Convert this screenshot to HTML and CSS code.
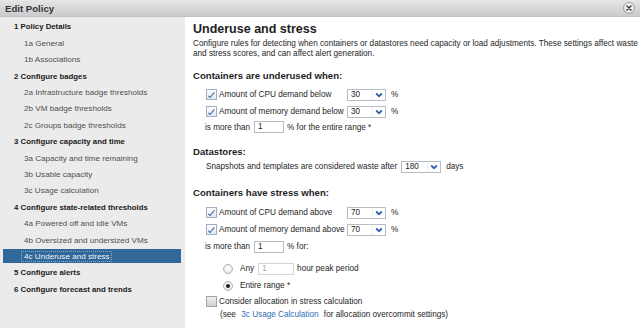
FILE: index.html
```html
<!DOCTYPE html>
<html>
<head>
<meta charset="utf-8">
<title>Edit Policy</title>
<link rel="stylesheet" href="styles.css">
</head>
<body>
<div class="dialog">
  <div class="titlebar">
    <span class="title">Edit Policy</span>
    <span class="close">
      <svg width="12" height="12" viewBox="0 0 12 12">
        <defs>
          <radialGradient id="cg" cx="50%" cy="40%" r="60%">
            <stop offset="0" stop-color="#ffffff"/>
            <stop offset="1" stop-color="#dcdcdc"/>
          </radialGradient>
        </defs>
        <circle cx="6" cy="6" r="5.5" fill="url(#cg)" stroke="#a3a3a3" stroke-width="1"/>
        <path d="M4 4 L8 8 M8 4 L4 8" stroke="#3c3c3c" stroke-width="1.5" stroke-linecap="round"/>
      </svg>
    </span>
  </div>
  <div class="body">
    <nav class="side">
      <div class="item h">1 Policy Details</div>
      <div class="item s">1a General</div>
      <div class="item s">1b Associations</div>
      <div class="item h">2 Configure badges</div>
      <div class="item s">2a Infrastructure badge thresholds</div>
      <div class="item s">2b VM badge thresholds</div>
      <div class="item s">2c Groups badge thresholds</div>
      <div class="item h">3 Configure capacity and time</div>
      <div class="item s">3a Capacity and time remaining</div>
      <div class="item s">3b Usable capacity</div>
      <div class="item s">3c Usage calculation</div>
      <div class="item h">4 Configure state-related thresholds</div>
      <div class="item s">4a Powered off and idle VMs</div>
      <div class="item s">4b Oversized and undersized VMs</div>
      <div class="item sel"><span class="bar"><span class="focus">4c Underuse and stress</span></span></div>
      <div class="item h">5 Configure alerts</div>
      <div class="item h">6 Configure forecast and trends</div>
    </nav>
    <main class="main">
      <h1 class="page-title">Underuse and stress</h1>
      <p class="desc">Configure rules for detecting when containers or datastores need capacity or load adjustments. These settings affect waste<br>and stress scores, and can affect alert generation.</p>

      <h2 class="sec first">Containers are underused when:</h2>
      <div class="group g1">
        <div class="row">
          <span class="cb on"></span><span class="lbl">Amount of CPU demand below</span>
          <span class="combo"><span class="val">30</span><span class="dd"><svg width="8" height="6" viewBox="0 0 8 6"><path d="M1.2 1.5 L4 4.3 L6.8 1.5" fill="none" stroke="#2d5ea8" stroke-width="1.8"/></svg></span></span>
          <span class="unit">%</span>
        </div>
        <div class="row">
          <span class="cb on"></span><span class="lbl">Amount of memory demand below</span>
          <span class="combo"><span class="val">30</span><span class="dd"><svg width="8" height="6" viewBox="0 0 8 6"><path d="M1.2 1.5 L4 4.3 L6.8 1.5" fill="none" stroke="#2d5ea8" stroke-width="1.8"/></svg></span></span>
          <span class="unit">%</span>
        </div>
        <div class="row more short">
          <span class="more-lbl">is more than</span>
          <span class="num">1</span>
          <span class="after">% for the entire range *</span>
        </div>
      </div>

      <h2 class="sec">Datastores:</h2>
      <div class="group">
        <div class="row">
          <span>Snapshots and templates are considered waste after</span>
          <span class="combo wide"><span class="val">180</span><span class="dd"><svg width="8" height="6" viewBox="0 0 8 6"><path d="M1.2 1.5 L4 4.3 L6.8 1.5" fill="none" stroke="#2d5ea8" stroke-width="1.8"/></svg></span></span>
          <span class="unit">days</span>
        </div>
      </div>

      <h2 class="sec">Containers have stress when:</h2>
      <div class="group g3">
        <div class="row">
          <span class="cb on"></span><span class="lbl">Amount of CPU demand above</span>
          <span class="combo"><span class="val">70</span><span class="dd"><svg width="8" height="6" viewBox="0 0 8 6"><path d="M1.2 1.5 L4 4.3 L6.8 1.5" fill="none" stroke="#2d5ea8" stroke-width="1.8"/></svg></span></span>
          <span class="unit">%</span>
        </div>
        <div class="row">
          <span class="cb on"></span><span class="lbl">Amount of memory demand above</span>
          <span class="combo"><span class="val">70</span><span class="dd"><svg width="8" height="6" viewBox="0 0 8 6"><path d="M1.2 1.5 L4 4.3 L6.8 1.5" fill="none" stroke="#2d5ea8" stroke-width="1.8"/></svg></span></span>
          <span class="unit">%</span>
        </div>
        <div class="row more">
          <span class="more-lbl">is more than</span>
          <span class="num">1</span>
          <span class="after">% for:</span>
        </div>
        <div class="radios">
          <div class="row radio">
            <span class="rb"></span><span>Any</span>
            <span class="num disabled">1</span>
            <span class="after">hour peak period</span>
          </div>
          <div class="row radio">
            <span class="rb on"></span><span>Entire range *</span>
          </div>
        </div>
        <div class="row short">
          <span class="cb"></span><span>Consider allocation in stress calculation</span>
        </div>
        <div class="note">(see <a class="link" href="#">3c Usage Calculation</a> for allocation overcommit settings)</div>
      </div>
    </main>
  </div>
</div>
</body>
</html>
```

FILE: styles.css
```css
html, body {
  margin: 0;
  padding: 0;
}

body {
  width: 640px;
  height: 328px;
  overflow: hidden;
  background: #ffffff;
  font-family: "Liberation Sans", Arial, sans-serif;
  font-size: 8.2px;
  color: #262626;
}

.dialog {
  display: flex;
  flex-direction: column;
  height: 328px;
}

.titlebar {
  flex: none;
  height: 17px;
  box-sizing: border-box;
  padding: 0 5px;
  display: flex;
  align-items: center;
  justify-content: space-between;
  background: linear-gradient(#e6e6e6, #cbcbcb);
  border-bottom: 1px solid #c2c2c2;
}

.title {
  font-size: 9.6px;
  font-weight: bold;
  color: #333333;
}

.close {
  width: 12px;
  height: 12px;
  display: flex;
}

.body {
  flex: 1;
  display: flex;
  min-height: 0;
}

/* Sidebar */
.side {
  flex: none;
  width: 185px;
  box-sizing: border-box;
  padding-top: 1.8px;
  background: #ebebeb;
}

.item {
  height: 16.4px;
  display: flex;
  align-items: center;
  white-space: nowrap;
}

.item.h {
  padding-left: 14px;
  font-size: 7.8px;
  font-weight: bold;
  color: #1a1a1a;
}

.item.s {
  padding-left: 24px;
  font-size: 8.1px;
  color: #4f4f4f;
}

.bar {
  margin-left: 3px;
  width: 178px;
  height: 14px;
  box-sizing: border-box;
  padding-left: 18px;
  display: flex;
  align-items: center;
  background: #30689a;
  font-size: 8.1px;
  color: #eef3f8;
}

.focus {
  padding: 0 2px 0 2px;
  border: 1px dotted rgba(210, 225, 240, 0.55);
  line-height: 9px;
}

/* Main */
.main {
  flex: 1;
  box-sizing: border-box;
  padding: 4px 0 0 8px;
  white-space: nowrap;
}

.page-title {
  margin: 0;
  height: 16px;
  line-height: 16px;
  font-size: 12.5px;
  font-weight: bold;
  color: #1e1e1e;
}

.desc {
  margin: 2px 0 0;
  line-height: 10px;
}

.sec {
  margin: 12px 0 0;
  height: 12px;
  line-height: 12px;
  font-size: 9.6px;
  font-weight: bold;
  color: #1e1e1e;
}

.sec.first {
  margin-top: 11px;
}

.group {
  padding-left: 13px;
}

.g1 {
  margin-top: 4px;
}

.g3 {
  margin-top: 5px;
}

.row {
  height: 17px;
  display: flex;
  align-items: center;
}

.row.short {
  height: 14px;
}

.cb {
  flex: none;
  position: relative;
  width: 11px;
  height: 11px;
  box-sizing: border-box;
  margin-right: 2px;
  border: 1px solid #a5a5a5;
  background: linear-gradient(#f0f0f0, #d0d0d0);
}

.cb.on {
  border-color: #9fb0c6;
  background: linear-gradient(#fdfdfe, #e2e9f2);
}

.cb.on::after {
  content: "";
  position: absolute;
  left: 3.2px;
  top: 0.5px;
  width: 2px;
  height: 5.5px;
  border-right: 1.4px solid #3a64a8;
  border-bottom: 1.4px solid #3a64a8;
  transform: rotate(40deg);
}

.lbl {
  width: 128px;
}

.combo {
  flex: none;
  width: 39px;
  height: 12px;
  box-sizing: border-box;
  display: flex;
  border: 1px solid #b8bdc5;
  background: #ffffff;
}

.combo.wide {
  width: 40px;
  margin-left: 4px;
}

.combo .val {
  flex: 1;
  padding-left: 3px;
  line-height: 10px;
  color: #1e1e1e;
}

.combo .dd {
  width: 12px;
  display: flex;
  align-items: center;
  justify-content: center;
  border-left: 1px solid #eceef1;
}

.unit {
  margin-left: 5px;
}

.more {
  margin-left: -1px;
}

.num {
  flex: none;
  width: 30px;
  height: 12px;
  box-sizing: border-box;
  margin-left: 4px;
  padding-left: 3px;
  line-height: 10px;
  border: 1px solid #b8bdc5;
  background: #ffffff;
  color: #1e1e1e;
}

.num.disabled {
  width: 36px;
  border-color: #d4d6d9;
  color: #a8a8a8;
}

.after {
  margin-left: 3px;
}

.radios {
  margin-top: 5px;
  padding-left: 17px;
}

.rb {
  flex: none;
  position: relative;
  width: 10px;
  height: 10px;
  box-sizing: border-box;
  margin-right: 7px;
  border: 1px solid #b0b0b0;
  border-radius: 50%;
  background: radial-gradient(circle at 50% 40%, #ffffff, #e1e1e1);
}

.rb.on::after {
  content: "";
  position: absolute;
  left: 2px;
  top: 2px;
  width: 4px;
  height: 4px;
  border-radius: 50%;
  background: #1e1e1e;
}

.note {
  height: 14px;
  line-height: 14px;
  padding-left: 14px;
}

.link {
  margin: 0 3px;
  color: #2e6db4;
  text-decoration: none;
}
```
